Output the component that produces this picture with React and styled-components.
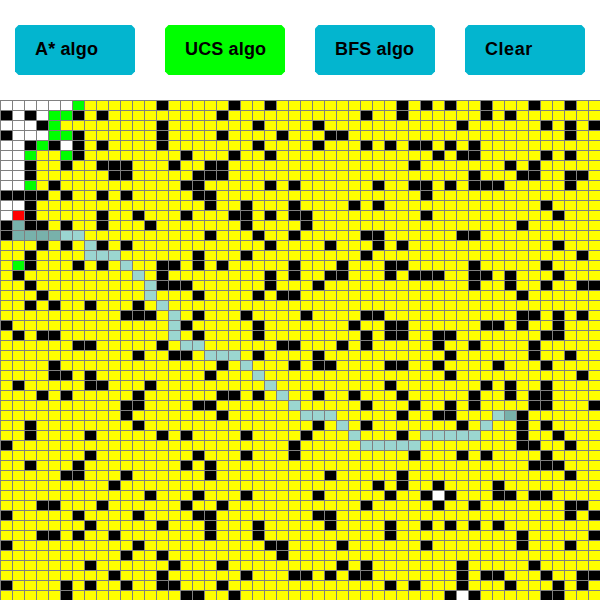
import React from "react";
import styled, { createGlobalStyle } from "styled-components";

const COLUMNS = 50;

const COLORS = {
  open: "#ffffff",
  visited: "#ffff00",
  wall: "#000000",
  frontier: "#00ff00",
  start: "#ff0000",
  path: "#9bd6d0",
  slowPath: "#78b1ab",
};

// Wall columns, one entry per grid row.
const WALLS = [
  [13, 19, 22, 33, 35, 37, 40, 44, 47],
  [0, 2, 6, 8, 18, 30, 33, 40, 42],
  [3, 13, 21, 26, 38, 45, 47, 49],
  [0, 6, 13, 18, 23, 27, 28, 47],
  [2, 4, 6, 8, 13, 21, 26, 30, 32, 34, 35, 37, 39],
  [6, 15, 19, 22, 36, 38, 39, 45, 47],
  [2, 5, 8, 9, 10, 14, 17, 18, 34, 42, 44],
  [2, 9, 10, 16, 17, 18, 39, 43, 44, 47, 48],
  [4, 15, 16, 22, 24, 31, 34, 35, 37, 39, 40, 41, 47],
  [0, 1, 2, 3, 5, 8, 10, 16, 17, 35],
  [2, 17, 20, 24, 29, 31, 45],
  [2, 8, 11, 15, 19, 20, 22, 24, 25, 35, 46],
  [0, 2, 3, 5, 8, 12, 20, 25, 43],
  [0, 17, 21, 24, 30, 31, 38, 39],
  [3, 5, 8, 10, 22, 27, 31, 33, 46],
  [2, 16, 20, 30, 48],
  [2, 6, 8, 13, 14, 16, 18, 24, 28, 32, 33, 39, 45],
  [1, 13, 22, 24, 27, 28, 32, 34, 35, 36, 39, 40, 42, 46],
  [2, 13, 14, 15, 22, 26, 39, 42, 45, 48, 49],
  [3, 16, 21, 23, 24, 43],
  [2, 4, 7, 11],
  [10, 11, 12, 16, 20, 25, 30, 31, 43, 44, 46, 48],
  [0, 15, 21, 29, 32, 33, 40, 41, 43, 46],
  [1, 3, 4, 16, 21, 30, 32, 33, 36, 37, 45, 46],
  [6, 7, 13, 23, 24, 28, 30, 36, 39, 44],
  [11, 14, 15, 21, 26, 37, 44, 47],
  [4, 18, 24, 26, 27, 32, 33, 36, 41, 45],
  [4, 5, 7, 17, 37, 48],
  [1, 7, 8, 12, 32, 40, 42, 45],
  [3, 5, 11, 18, 19, 21, 26, 29, 33, 39, 42, 44, 45],
  [10, 11, 16, 17, 30, 34, 37, 39, 44, 45, 49],
  [10, 18, 33, 36, 37, 43],
  [2, 11, 26, 30, 38, 43, 45],
  [2, 7, 13, 15, 20, 25, 33, 43, 46],
  [0, 24, 43, 44, 47],
  [7, 16, 20, 24, 34, 38, 40, 45],
  [2, 6, 15, 17, 44, 45, 46],
  [5, 6, 10, 17, 27, 33, 47],
  [9, 31, 33, 36, 41],
  [12, 16, 20, 26, 32, 35, 37, 41, 42, 44, 45],
  [3, 4, 8, 15, 18, 30, 36, 39, 47, 48],
  [0, 6, 11, 16, 17, 26, 27, 47, 49],
  [7, 13, 17, 21, 27, 32, 35, 37, 39, 41],
  [3, 4, 6, 9, 17, 21, 32, 43, 49],
  [0, 11, 22, 23, 28, 35, 43, 47],
  [10, 13, 23],
  [7, 14, 18, 28, 30, 38, 44],
  [9, 13, 20, 24, 25, 27, 29, 30, 38, 40, 41, 45, 48, 49],
  [0, 5, 7, 10, 13, 14, 18, 32, 34, 38, 42, 46, 48],
  [5, 15, 16, 19, 37, 39, 45, 46],
];

// Columns by row for every other kind of cell; the rest are visited.
const MARKS = {
  open: {
    0: [0, 1, 2, 3, 4, 5],
    1: [1, 3],
    2: [0, 1, 2],
    3: [1, 2, 3],
    4: [0, 1, 5],
    5: [0, 1],
    6: [0, 1],
    7: [0, 1],
    8: [0, 1],
    10: [0, 1],
    11: [0],
    39: [36],
    49: [38],
  },
  frontier: { 0: [6], 1: [4, 5], 2: [4], 3: [4, 5], 4: [3], 5: [2, 5], 8: [2], 16: [1] },
  start: { 11: [1] },
  slowPath: { 12: [1], 13: [1, 2, 3, 4], 31: [42] },
  path: {
    13: [5, 6],
    14: [7],
    15: [7, 8, 9],
    16: [10],
    17: [11],
    18: [12],
    19: [12],
    20: [13],
    21: [14],
    22: [14],
    23: [14],
    24: [15, 16],
    25: [17, 18, 19],
    26: [20],
    27: [21],
    28: [22],
    29: [23],
    30: [24],
    31: [25, 26, 27, 41],
    32: [28, 40],
    33: [29, 35, 36, 37, 38, 39],
    34: [30, 31, 32, 33, 34],
  },
};

const CELLS = WALLS.flatMap((walls, row) => {
  const kinds = Array(COLUMNS).fill("visited");
  walls.forEach((column) => {
    kinds[column] = "wall";
  });
  Object.entries(MARKS).forEach(([kind, rows]) => {
    (rows[row] || []).forEach((column) => {
      kinds[column] = kind;
    });
  });
  return kinds;
});

const BUTTONS = [
  { label: "A* algo", tracking: 0.15 },
  { label: "UCS algo", tracking: 0.15, active: true },
  { label: "BFS algo", tracking: 0.15 },
  { label: "Clear", tracking: 0.55 },
];

const GlobalStyle = createGlobalStyle`
  * { box-sizing: border-box; }
  body { margin: 0; background: #ffffff; }
`;

const Page = styled.main`
  display: flex;
  flex-direction: column;
  width: 600px;
  height: 600px;
  overflow: hidden;
`;

const Toolbar = styled.header`
  display: flex;
  gap: 30px;
  height: 100px;
  padding: 25px 15px;
`;

const AlgoButton = styled.button`
  width: 120px;
  height: 50px;
  padding: 0 0 2px 20px;
  border: 0;
  background: ${({ $active }) => ($active ? "#00ff00" : "#03b5cf")};
  clip-path: polygon(
    3.5px 0, calc(100% - 3.5px) 0, 100% 3.5px, 100% calc(100% - 3.5px),
    calc(100% - 3.5px) 100%, 3.5px 100%, 0 calc(100% - 3.5px), 0 3.5px
  );
  color: #000000;
  font: bold 18px/20px "Liberation Sans", Arial, sans-serif;
  letter-spacing: ${({ $tracking }) => $tracking}px;
  text-align: left;
  white-space: nowrap;
`;

const Grid = styled.section`
  display: grid;
  grid-template-columns: repeat(${COLUMNS}, 12px);
  grid-auto-rows: 10px;
`;

const Cell = styled.div`
  border: solid #808080;
  border-width: 1px 0 0 1px;
  background: ${({ $kind }) => COLORS[$kind]};
`;

export default function App() {
  return (
    <>
      <GlobalStyle />
      <Page>
        <Toolbar>
          {BUTTONS.map(({ label, tracking, active }) => (
            <AlgoButton key={label} type="button" $active={active} $tracking={tracking}>
              {label}
            </AlgoButton>
          ))}
        </Toolbar>
        <Grid>
          {CELLS.map((kind, index) => (
            <Cell key={index} $kind={kind} />
          ))}
        </Grid>
      </Page>
    </>
  );
}
